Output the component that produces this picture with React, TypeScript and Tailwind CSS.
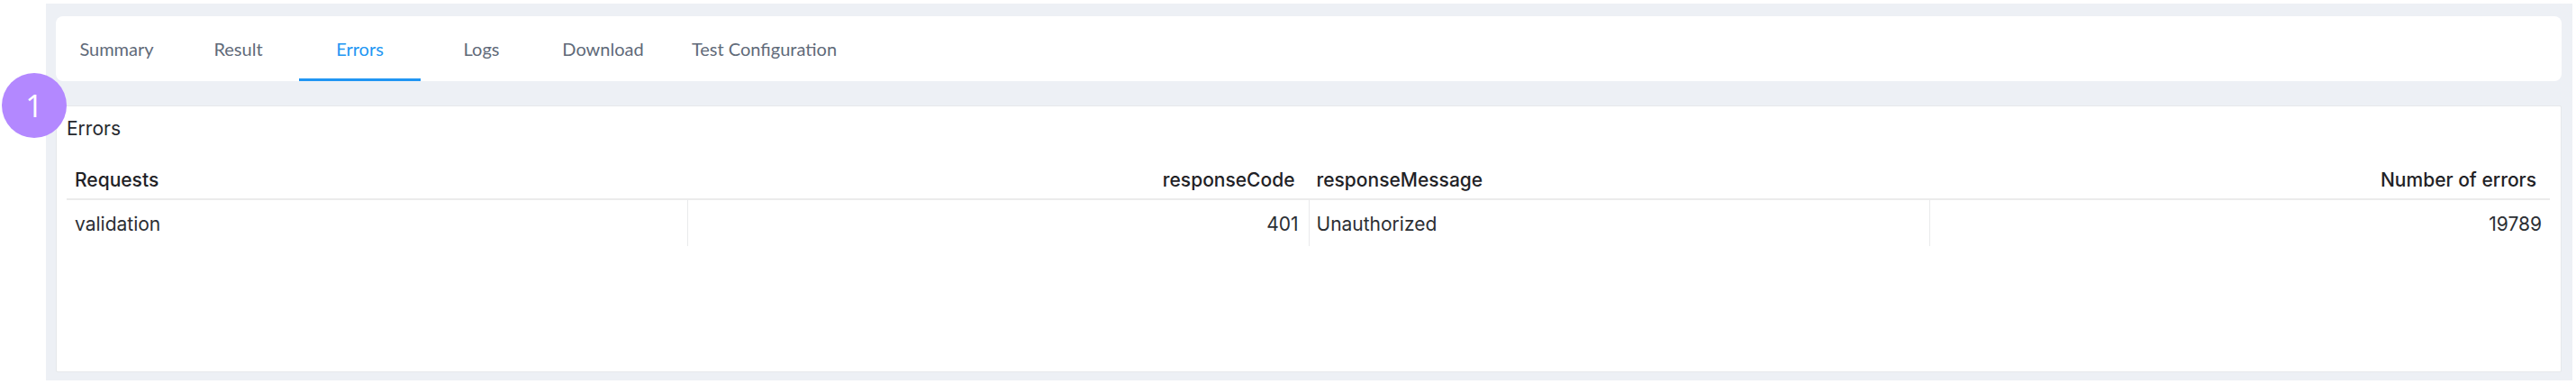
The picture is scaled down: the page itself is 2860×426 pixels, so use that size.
import React from "react";

const tabs = ["Summary", "Result", "Errors", "Logs", "Download", "Test Configuration"];

export default function App() {
  return (
    <div className="relative w-[2860px] h-[426px] bg-white pt-[4px] pl-[51px] pr-[4px] pb-[4px]">
      <div className="flex flex-col h-full bg-[#edf0f5] pt-[14px] pl-[11px] pr-[12px] pb-[9px] gap-[27px]">
        <div className="h-[72px] bg-white rounded-[8px] flex items-stretch">
          {tabs.map((t) => {
            const active = t === "Errors";
            const last = t === "Test Configuration";
            return (
              <div
                key={t}
                className={
                  active
                    ? "w-[135px] shrink-0 flex items-center justify-center text-[20px] text-[#2196f3] border-b-[3px] border-[#2196f3] pt-[3px] whitespace-nowrap"
                    : last
                    ? "w-[223px] shrink-0 flex items-center justify-center text-[20px] text-[#5f6a79] whitespace-nowrap"
                    : "w-[135px] shrink-0 flex items-center justify-center text-[20px] text-[#5f6a79] whitespace-nowrap"
                }
                style={{ fontFamily: "Lato, 'Noto Sans', sans-serif" }}
              >
                {t}
              </div>
            );
          })}
        </div>
        <div
          className="flex-1 bg-white border border-[#e6e8eb] rounded-[2px] pt-[12px] pl-[11px] pr-[12px]"
          style={{ fontFamily: "Inter, 'Liberation Sans', sans-serif" }}
        >
          <div className="text-[21px] leading-[25px] text-[#25282d]">Errors</div>
          <div className="mt-[19px]">
            <div className="grid grid-cols-4 h-[48px] items-end border-b-2 border-[#ebebeb] text-[21px] leading-[25px] font-medium text-[#1f2226]">
              <div className="pl-[9px] pb-[8px]">Requests</div>
              <div className="pr-[15px] pb-[8px] text-right">responseCode</div>
              <div className="pl-[9px] pb-[8px]">responseMessage</div>
              <div className="pr-[15px] pb-[8px] text-right">Number of errors</div>
            </div>
            <div className="grid grid-cols-4 h-[51px] text-[21px] leading-[25px] text-[#2b2e33]">
              <div className="pl-[9px] pt-[14px]">validation</div>
              <div className="pr-[11px] pt-[14px] text-right border-l border-[#e9eaec]">401</div>
              <div className="pl-[8px] pt-[14px] border-l border-[#e9eaec]">Unauthorized</div>
              <div className="pr-[9px] pt-[14px] text-right border-l border-[#e9eaec]">19789</div>
            </div>
          </div>
        </div>
      </div>
      <div
        className="absolute left-[2px] top-[81px] w-[72px] h-[72px] rounded-full bg-[#b388ff] flex items-center justify-center text-white text-[34px] font-normal"
        style={{ fontFamily: "'Open Sans', 'Noto Sans', sans-serif" }}
      >
        1
      </div>
    </div>
  );
}
